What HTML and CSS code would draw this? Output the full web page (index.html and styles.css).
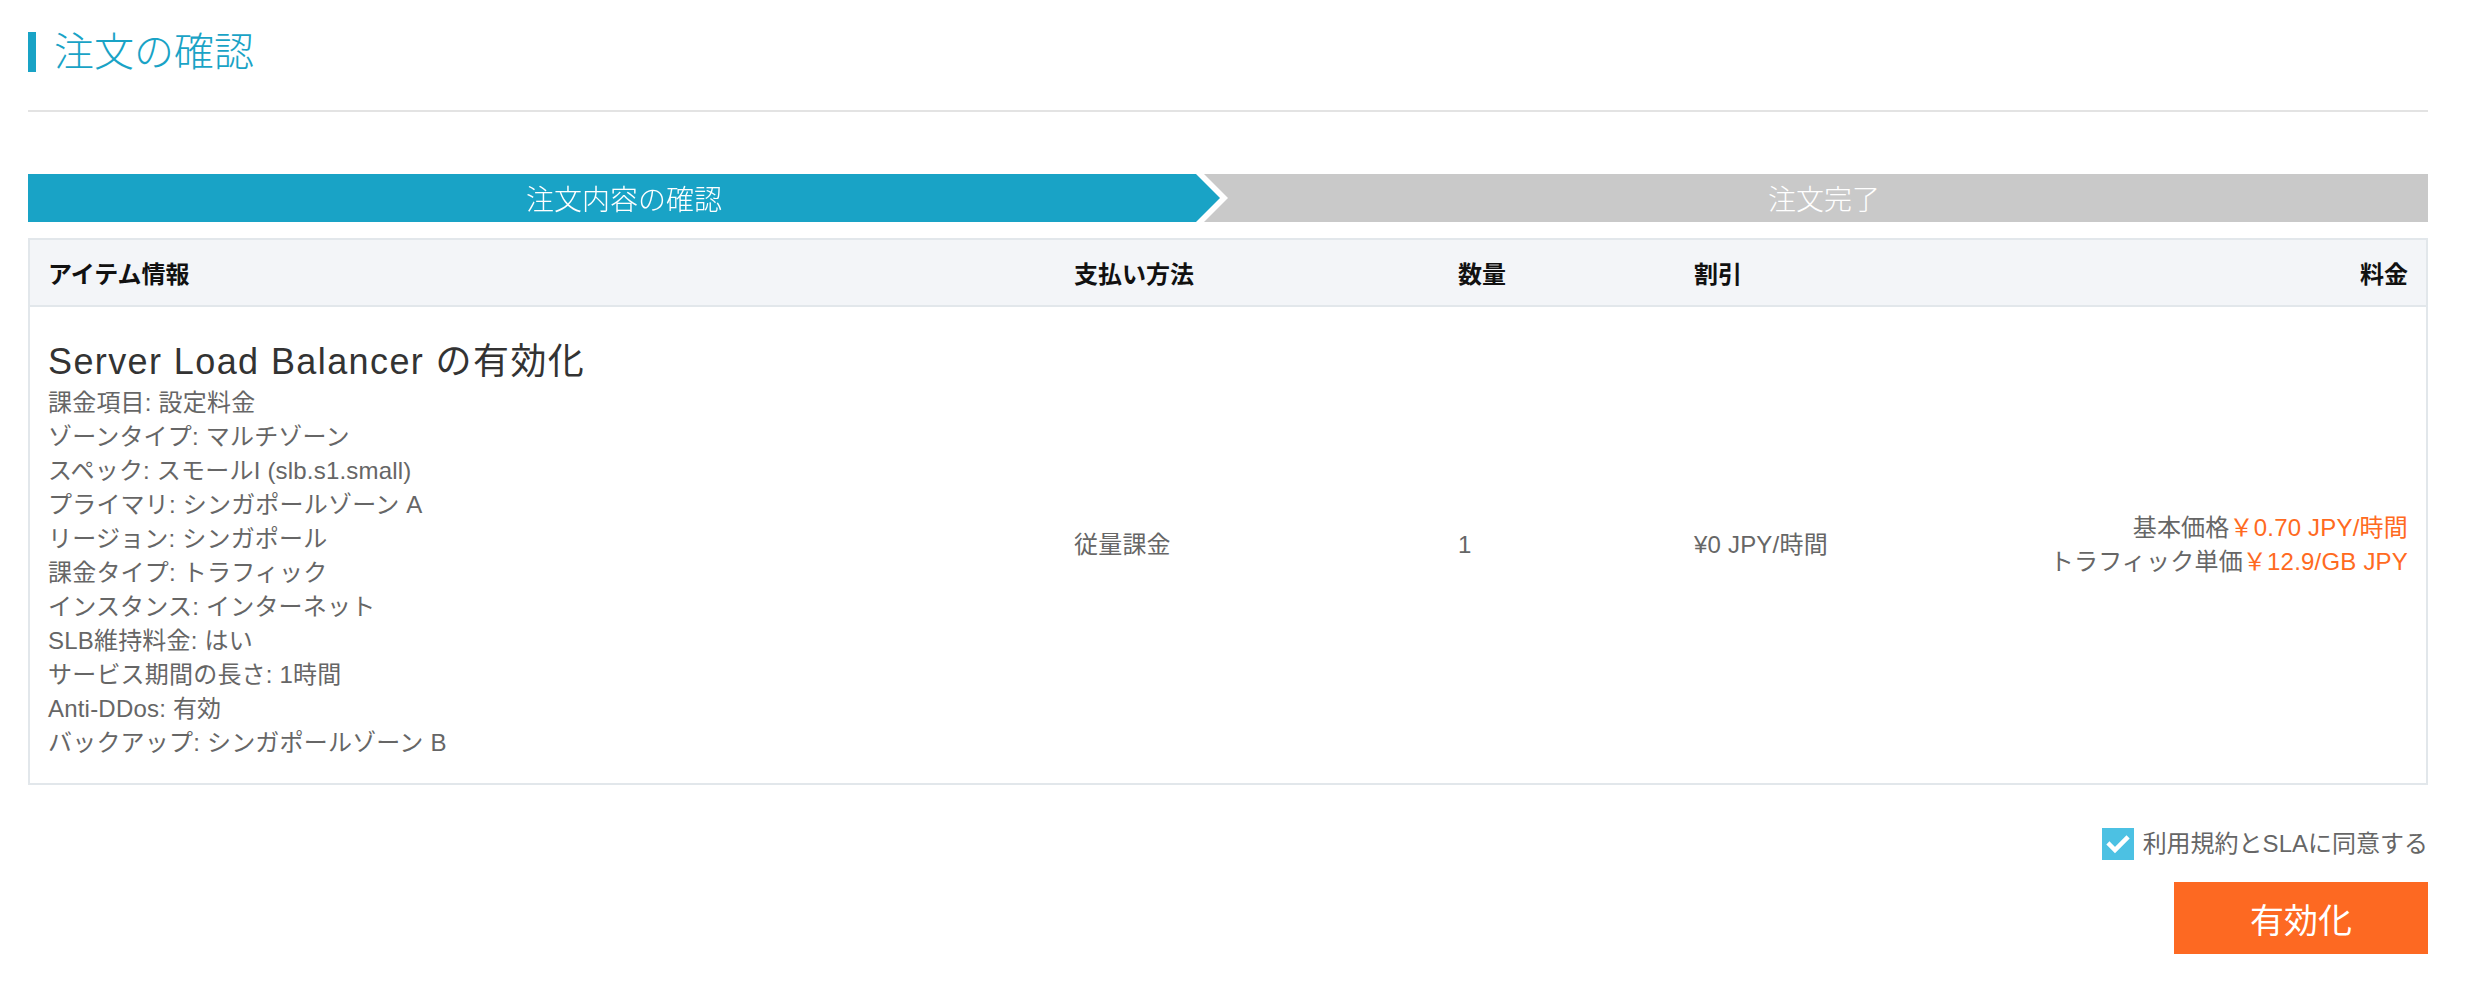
FILE: index.html
```html
<!DOCTYPE html>
<html lang="ja">
  <head>
    <meta charset="UTF-8" />
    <meta name="viewport" content="width=device-width, initial-scale=1.0" />
    <title>注文の確認</title>
    <link rel="stylesheet" href="styles.css">
  </head>
  <body>
    <div class="page">
      <h1 class="page-title">注文の確認</h1>
      <hr class="divider" />

      <div class="steps">
        <div class="step-wrap">
          <div class="step step-active">注文内容の確認</div>
        </div>
        <div class="step step-next">注文完了</div>
      </div>

      <table class="order">
        <colgroup>
          <col class="col-item" />
          <col class="col-pay" />
          <col class="col-qty" />
          <col class="col-discount" />
          <col class="col-price" />
        </colgroup>
        <thead>
          <tr>
            <th>アイテム情報</th>
            <th>支払い方法</th>
            <th>数量</th>
            <th>割引</th>
            <th class="align-right">料金</th>
          </tr>
        </thead>
        <tbody>
          <tr>
            <td class="item">
              <div class="item-name">Server Load Balancer の有効化</div>
              <ul class="item-spec">
                <li>課金項目: 設定料金</li>
                <li>ゾーンタイプ: マルチゾーン</li>
                <li>スペック: スモールI (slb.s1.small)</li>
                <li>プライマリ: シンガポールゾーン A</li>
                <li>リージョン: シンガポール</li>
                <li>課金タイプ: トラフィック</li>
                <li>インスタンス: インターネット</li>
                <li>SLB維持料金: はい</li>
                <li>サービス期間の長さ: 1時間</li>
                <li>Anti-DDos: 有効</li>
                <li>バックアップ: シンガポールゾーン B</li>
              </ul>
            </td>
            <td>従量課金</td>
            <td>1</td>
            <td>¥0 JPY/時間</td>
            <td class="align-right price">
              <div>基本価格<span class="amount">￥0.70 JPY/時間</span></div>
              <div>トラフィック単価<span class="amount">￥12.9/GB JPY</span></div>
            </td>
          </tr>
        </tbody>
      </table>

      <label class="agree">
        <span class="checkbox">
          <svg width="32" height="32" viewBox="0 0 32 32">
            <polyline points="7.5,16.5 13,22 24.5,10.5" fill="none" stroke="#fff" stroke-width="4.5" stroke-linecap="square" />
          </svg>
        </span>
        利用規約とSLAに同意する
      </label>

      <div class="actions">
        <button class="btn-primary" type="button">有効化</button>
      </div>
    </div>
  </body>
</html>
```

FILE: styles.css
```css
body {
  margin: 0;
  padding: 0;
  font-family: "Liberation Sans", "Noto Sans CJK JP", sans-serif;
  color: #333;
  background: #fff;
}

.page {
  padding: 32px 38px 40px 28px;
}

.page-title {
  margin: 0;
  height: 40px;
  display: flex;
  align-items: center;
  border-left: 8px solid #19a3c6;
  padding-left: 18px;
  font-size: 40px;
  line-height: 40px;
  font-weight: 300;
  color: #19a3c6;
}

.divider {
  margin: 38px 0 0;
  border: 0;
  height: 2px;
  background: #e3e3e3;
}

/* step bar */
.steps {
  margin-top: 62px;
  display: flex;
  height: 48px;
  background: #c9c9c9;
}

.step-wrap {
  filter: drop-shadow(8px 0 0 #fff);
}

.step {
  height: 48px;
  display: flex;
  align-items: center;
  justify-content: center;
  font-size: 28px;
  font-weight: 300;
  color: #fff;
}

.step-active {
  width: 1192px;
  background: #19a3c6;
  clip-path: polygon(0 0, calc(100% - 24px) 0, 100% 50%, calc(100% - 24px) 100%, 0 100%);
}

.step-next {
  flex: 1;
}

/* order table */
.order {
  margin-top: 16px;
  width: 100%;
  border-collapse: collapse;
  border: 2px solid #e2e7eb;
  table-layout: fixed;
}

.col-item { width: 1027px; }
.col-pay { width: 384px; }
.col-qty { width: 236px; }
.col-discount { width: 320px; }

.order th {
  height: 65px;
  padding: 0 18px;
  background: #f3f5f8;
  border-bottom: 2px solid #e2e7eb;
  text-align: left;
  font-size: 24px;
  font-weight: bold;
  color: #111;
}

.order td {
  padding: 0 18px;
  vertical-align: middle;
  font-size: 24px;
  line-height: 34px;
  letter-spacing: 0.2px;
  color: #666;
}

.order .align-right {
  text-align: right;
}

.order td.item {
  padding-top: 31px;
  padding-bottom: 23px;
}

.item-name {
  font-size: 36px;
  line-height: 48px;
  letter-spacing: 1.4px;
  color: #333;
}

.item-spec {
  margin: 0;
  padding: 0;
  list-style: none;
}

.price {
  line-height: 35px;
  letter-spacing: 0.4px;
}

.amount {
  color: #ff6a21;
}

/* agreement + submit */
.agree {
  margin-top: 43px;
  display: flex;
  justify-content: flex-end;
  align-items: center;
  gap: 9px;
  font-size: 24px;
  line-height: 32px;
  color: #666;
}

.checkbox {
  width: 32px;
  height: 32px;
  background: #4cc1e3;
  display: block;
}

.checkbox svg {
  display: block;
}

.actions {
  margin-top: 22px;
  display: flex;
  justify-content: flex-end;
}

.btn-primary {
  width: 254px;
  height: 72px;
  border: 0;
  border-radius: 0;
  background: #fd6922;
  color: #fff;
  font-family: inherit;
  font-size: 34px;
  cursor: pointer;
}
```
